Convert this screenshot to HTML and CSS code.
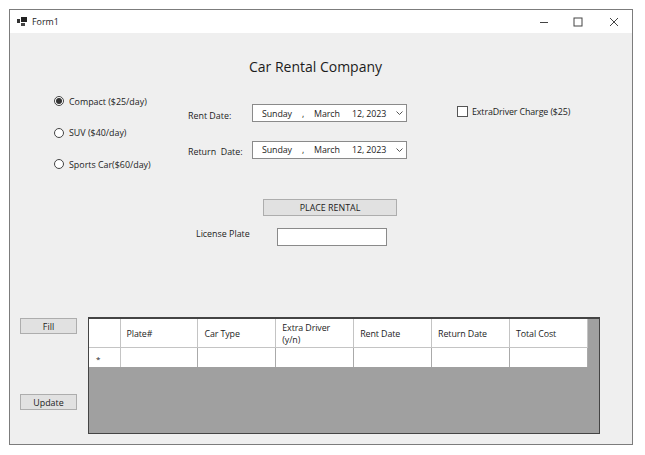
FILE: index.html
```html
<!DOCTYPE html>
<html lang="en">
<head>
    <meta charset="UTF-8">
    <title>Form1</title>
    <link rel="stylesheet" href="styles.css">
</head>
<body>
    <div class="window">
        <div class="titlebar">
            <svg class="app-icon" width="10" height="9" viewBox="0 0 10 9">
                <rect x="0" y="2" width="3" height="4" fill="#333"/>
                <rect x="4" y="0" width="6" height="5" fill="#222"/>
                <rect x="4" y="6" width="4" height="3" fill="#444"/>
            </svg>
            <span class="form-name">Form1</span>
            <div class="win-buttons">
                <svg width="10" height="10" viewBox="0 0 10 10"><path d="M1 5.5H9" stroke="#444" stroke-width="1"/></svg>
                <svg width="10" height="10" viewBox="0 0 10 10"><rect x="1" y="1" width="8" height="8" fill="none" stroke="#444" stroke-width="1"/></svg>
                <svg width="10" height="10" viewBox="0 0 10 10"><path d="M1 1L9 9M9 1L1 9" stroke="#444" stroke-width="1"/></svg>
            </div>
        </div>
        <div class="form">
            <h1 class="heading">Car Rental Company</h1>
            <div class="options">
                <div class="radios">
                    <label class="radio-row"><span class="radio checked"></span>Compact ($25/day)</label>
                    <label class="radio-row"><span class="radio"></span>SUV ($40/day)</label>
                    <label class="radio-row"><span class="radio"></span>Sports Car($60/day)</label>
                </div>
                <div class="dates">
                    <div class="date-row">
                        <span class="date-label">Rent Date:</span>
                        <div class="date-box">
                            <span class="d-day">Sunday</span><span class="d-comma">,</span><span class="d-month">March</span><span>12, 2023</span>
                            <svg class="chevron" width="7" height="4" viewBox="0 0 7 4"><path d="M0.5 0.5L3.5 3.5L6.5 0.5" fill="none" stroke="#555"/></svg>
                        </div>
                    </div>
                    <div class="date-row">
                        <span class="date-label">Return&nbsp; Date:</span>
                        <div class="date-box">
                            <span class="d-day">Sunday</span><span class="d-comma">,</span><span class="d-month">March</span><span>12, 2023</span>
                            <svg class="chevron" width="7" height="4" viewBox="0 0 7 4"><path d="M0.5 0.5L3.5 3.5L6.5 0.5" fill="none" stroke="#555"/></svg>
                        </div>
                    </div>
                </div>
                <label class="check-row"><span class="checkbox"></span>ExtraDriver Charge ($25)</label>
            </div>
            <button class="btn place-btn">PLACE RENTAL</button>
            <div class="plate-row">
                <span class="plate-label">License Plate</span>
                <input class="plate-input" type="text">
            </div>
            <div class="bottom">
                <div class="side-buttons">
                    <button class="btn side-btn">Fill</button>
                    <button class="btn side-btn">Update</button>
                </div>
                <div class="grid-view">
                    <div class="rows">
                        <div class="row head">
                            <div class="cell corner"></div>
                            <div class="cell">Plate#</div>
                            <div class="cell">Car Type</div>
                            <div class="cell">Extra Driver<br>(y/n)</div>
                            <div class="cell">Rent Date</div>
                            <div class="cell">Return Date</div>
                            <div class="cell">Total Cost</div>
                        </div>
                        <div class="row new-row">
                            <div class="cell corner star">*</div>
                            <div class="cell"></div>
                            <div class="cell"></div>
                            <div class="cell"></div>
                            <div class="cell"></div>
                            <div class="cell"></div>
                            <div class="cell"></div>
                        </div>
                    </div>
                </div>
            </div>
        </div>
    </div>
</body>
</html>
```

FILE: styles.css
```css
html,body{
    margin:0;
    padding:0;
    background:#fff;
}
body{
    font-family:"Open Sans","Noto Sans",sans-serif;
    font-size:8.9px;
    color:#1c1c1c;
}
.window{
    box-sizing:border-box;
    width:624px;
    height:436px;
    margin:9px 0 0 9px;
    border:1px solid #7c7c7c;
    background:#efefef;
    display:flex;
    flex-direction:column;
}
/* title bar */
.titlebar{
    height:23px;
    background:#fff;
    display:flex;
    align-items:center;
    padding-left:7px;
    flex-shrink:0;
}
.app-icon{
    margin-right:5px;
}
.win-buttons{
    margin-left:auto;
    display:flex;
    gap:26px;
    padding-right:13px;
}
.win-buttons svg:first-child{
    margin-right:-2px;
}
/* form */
.form{
    flex:1;
    display:flex;
    flex-direction:column;
}
.heading{
    margin:23px 0 0 0;
    font-size:14px;
    font-weight:400;
    line-height:21px;
    text-align:center;
    width:611px;
}
.options{
    display:flex;
    margin-top:17px;
    height:87px;
}
.radios{
    width:178px;
    padding-left:44px;
    box-sizing:border-box;
    display:flex;
    flex-direction:column;
    gap:17.5px;
    flex-shrink:0;
}
.radio-row{
    display:flex;
    align-items:center;
    height:14px;
}
.radio{
    box-sizing:border-box;
    width:10px;
    height:10px;
    border:1px solid #444;
    border-radius:50%;
    margin-right:5px;
    background:#fff;
    display:flex;
    align-items:center;
    justify-content:center;
}
.radio.checked::after{
    content:"";
    width:6px;
    height:6px;
    border-radius:50%;
    background:#333;
}
.dates{
    width:269px;
    flex-shrink:0;
    display:flex;
    flex-direction:column;
    gap:18.5px;
    padding-top:10px;
}
.date-row{
    display:flex;
    align-items:center;
    height:18px;
}
.date-label{
    width:64px;
    padding-top:4px;
    flex-shrink:0;
}
.date-box{
    box-sizing:border-box;
    width:155px;
    height:18px;
    border:1px solid #8a8a8a;
    background:#fff;
    display:flex;
    align-items:center;
    padding-left:9px;
    letter-spacing:-0.1px;
}
.d-day{
    width:40px;
}
.d-comma{
    width:12px;
}
.d-month{
    width:38px;
}
.chevron{
    margin-left:auto;
    margin-right:3px;
}
.check-row{
    display:flex;
    align-items:center;
    height:14px;
    margin-top:10px;
    letter-spacing:-0.12px;
}
.checkbox{
    box-sizing:border-box;
    width:11px;
    height:11px;
    border:1px solid #555;
    background:#fff;
    margin-right:4px;
}
.btn{
    box-sizing:border-box;
    font-family:inherit;
    font-size:8.9px;
    color:#1c1c1c;
    background:#e1e1e1;
    border:1px solid #adadad;
    padding:0;
}
.place-btn{
    width:134px;
    height:17px;
    margin:18px 0 0 253px;
}
.plate-row{
    display:flex;
    align-items:center;
    margin-top:12px;
    padding-left:186px;
    height:18px;
}
.plate-label{
    width:81px;
    margin-top:-7px;
}
.plate-input{
    box-sizing:border-box;
    width:110px;
    height:18px;
    border:1px solid #8a8a8a;
    background:#fff;
    padding:0;
}
/* bottom area */
.bottom{
    display:flex;
    margin-top:71px;
    padding-left:10px;
}
.side-buttons{
    width:58px;
    margin-right:10px;
    display:flex;
    flex-direction:column;
    gap:60px;
    padding-top:1px;
}
.side-btn{
    width:57px;
    height:16px;
}
.grid-view{
    box-sizing:border-box;
    width:512px;
    height:117px;
    background:#a0a0a0;
    border:1px solid #444;
    border-top-width:2px;
}
.rows{
    width:499px;
}
.row{
    display:grid;
    grid-template-columns:31.5px repeat(6,77.9px);
}
.cell{
    box-sizing:border-box;
    background:#fff;
    border-right:1px solid #c4c4c4;
    padding-left:6px;
    display:flex;
    align-items:center;
    line-height:12px;
    letter-spacing:-0.1px;
}
.head{
    height:29px;
}
.head .cell{
    border-bottom:1px solid #c4c4c4;
    display:block;
    align-self:stretch;
    padding-top:9px;
}
.head .cell:nth-child(4){
    padding-top:3px;
}
.new-row{
    height:19px;
}
.new-row .cell:not(.corner){
    border-right-color:#aaa;
}
.star{
    font-size:8px;
    padding-left:7px;
    padding-top:3px;
}
```
